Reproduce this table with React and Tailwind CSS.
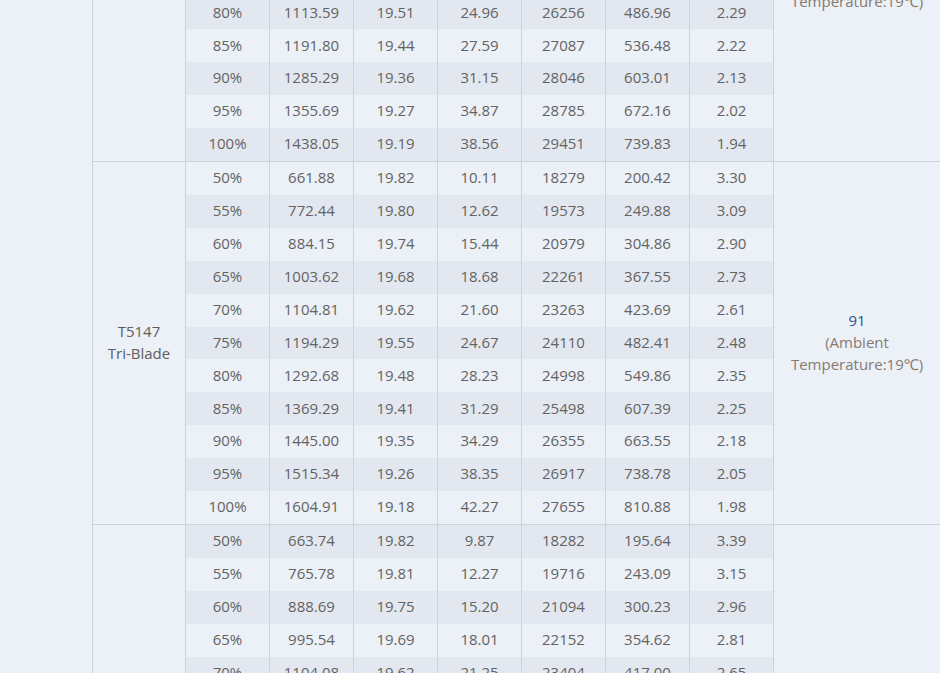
import React from "react";

const groups = [
  {
    model: ["T5147", "Bi-Blade"],
    note: "88",
    rows: [
      ["50%", "612.40", "19.83", "9.32", "19120", "184.81", "3.31"],
      ["55%", "712.65", "19.79", "11.66", "20398", "230.76", "3.09"],
      ["60%", "815.27", "19.74", "14.28", "21870", "281.88", "2.89"],
      ["65%", "921.44", "19.68", "17.24", "23195", "339.28", "2.72"],
      ["70%", "1013.70", "19.63", "19.88", "24306", "390.24", "2.60"],
      ["75%", "1049.31", "19.57", "22.36", "25311", "437.59", "2.40"],
      ["80%", "1113.59", "19.51", "24.96", "26256", "486.96", "2.29"],
      ["85%", "1191.80", "19.44", "27.59", "27087", "536.48", "2.22"],
      ["90%", "1285.29", "19.36", "31.15", "28046", "603.01", "2.13"],
      ["95%", "1355.69", "19.27", "34.87", "28785", "672.16", "2.02"],
      ["100%", "1438.05", "19.19", "38.56", "29451", "739.83", "1.94"],
    ],
  },
  {
    model: ["T5147", "Tri-Blade"],
    note: "91",
    rows: [
      ["50%", "661.88", "19.82", "10.11", "18279", "200.42", "3.30"],
      ["55%", "772.44", "19.80", "12.62", "19573", "249.88", "3.09"],
      ["60%", "884.15", "19.74", "15.44", "20979", "304.86", "2.90"],
      ["65%", "1003.62", "19.68", "18.68", "22261", "367.55", "2.73"],
      ["70%", "1104.81", "19.62", "21.60", "23263", "423.69", "2.61"],
      ["75%", "1194.29", "19.55", "24.67", "24110", "482.41", "2.48"],
      ["80%", "1292.68", "19.48", "28.23", "24998", "549.86", "2.35"],
      ["85%", "1369.29", "19.41", "31.29", "25498", "607.39", "2.25"],
      ["90%", "1445.00", "19.35", "34.29", "26355", "663.55", "2.18"],
      ["95%", "1515.34", "19.26", "38.35", "26917", "738.78", "2.05"],
      ["100%", "1604.91", "19.18", "42.27", "27655", "810.88", "1.98"],
    ],
  },
  {
    model: ["T5150", "Tri-Blade"],
    note: "92",
    rows: [
      ["50%", "663.74", "19.82", "9.87", "18282", "195.64", "3.39"],
      ["55%", "765.78", "19.81", "12.27", "19716", "243.09", "3.15"],
      ["60%", "888.69", "19.75", "15.20", "21094", "300.23", "2.96"],
      ["65%", "995.54", "19.69", "18.01", "22152", "354.62", "2.81"],
      ["70%", "1104.08", "19.62", "21.25", "23404", "417.00", "2.65"],
      ["75%", "1201.36", "19.55", "24.49", "24288", "478.80", "2.51"],
      ["80%", "1298.12", "19.48", "27.98", "25102", "545.05", "2.38"],
      ["85%", "1380.57", "19.41", "31.02", "25736", "602.10", "2.29"],
      ["90%", "1452.90", "19.34", "34.11", "26420", "659.69", "2.20"],
      ["95%", "1522.13", "19.26", "38.02", "27011", "732.26", "2.08"],
      ["100%", "1611.48", "19.17", "41.88", "27710", "802.84", "2.01"],
    ],
  },
];

export default function App() {
  let globalIndex = 0;
  return (
    <div
      className="h-[673px] w-[940px] overflow-hidden bg-[#ecf0f7] text-[15px] text-[#636363]"
      style={{ fontFamily: '"Open Sans", "Noto Sans", sans-serif' }}
    >
      <div className="-mt-[201px] pl-[92px]">
        <div className="border-l border-[#cdd3dc]">
          {groups.map((g, gi) => (
            <div key={gi} className="flex border-b border-[#cdd3dc]">
              <div className="flex w-[93px] shrink-0 flex-col items-center justify-center border-r border-[#cdd3dc] pb-[2px] text-center leading-[22px] text-[#5e5e5e]">
                <span>{g.model[0]}</span>
                <span>{g.model[1]}</span>
              </div>
              <div className="flex w-[588px] shrink-0 flex-col">
                {g.rows.map((r, ri) => {
                  const dark = globalIndex % 2 === 0;
                  globalIndex += 1;
                  return (
                    <div
                      key={ri}
                      className={
                        "flex h-[32.909px] items-center " +
                        (dark ? "bg-[#e3e8f0]" : "bg-[#ecf0f7]")
                      }
                    >
                      {r.map((c, ci) => (
                        <div
                          key={ci}
                          className="flex h-full w-[84px] shrink-0 items-center justify-center border-r border-[#cdd3dc] pb-[2px]"
                        >
                          {c}
                        </div>
                      ))}
                    </div>
                  );
                })}
              </div>
              <div className="flex flex-1 flex-col items-center justify-center pb-[2px] text-center leading-[22px]">
                <span className="text-[#34508a]">{g.note}</span>
                <span className="text-[#857b72]">(Ambient</span>
                <span className="text-[#857b72]">Temperature:19℃)</span>
              </div>
            </div>
          ))}
        </div>
      </div>
    </div>
  );
}
